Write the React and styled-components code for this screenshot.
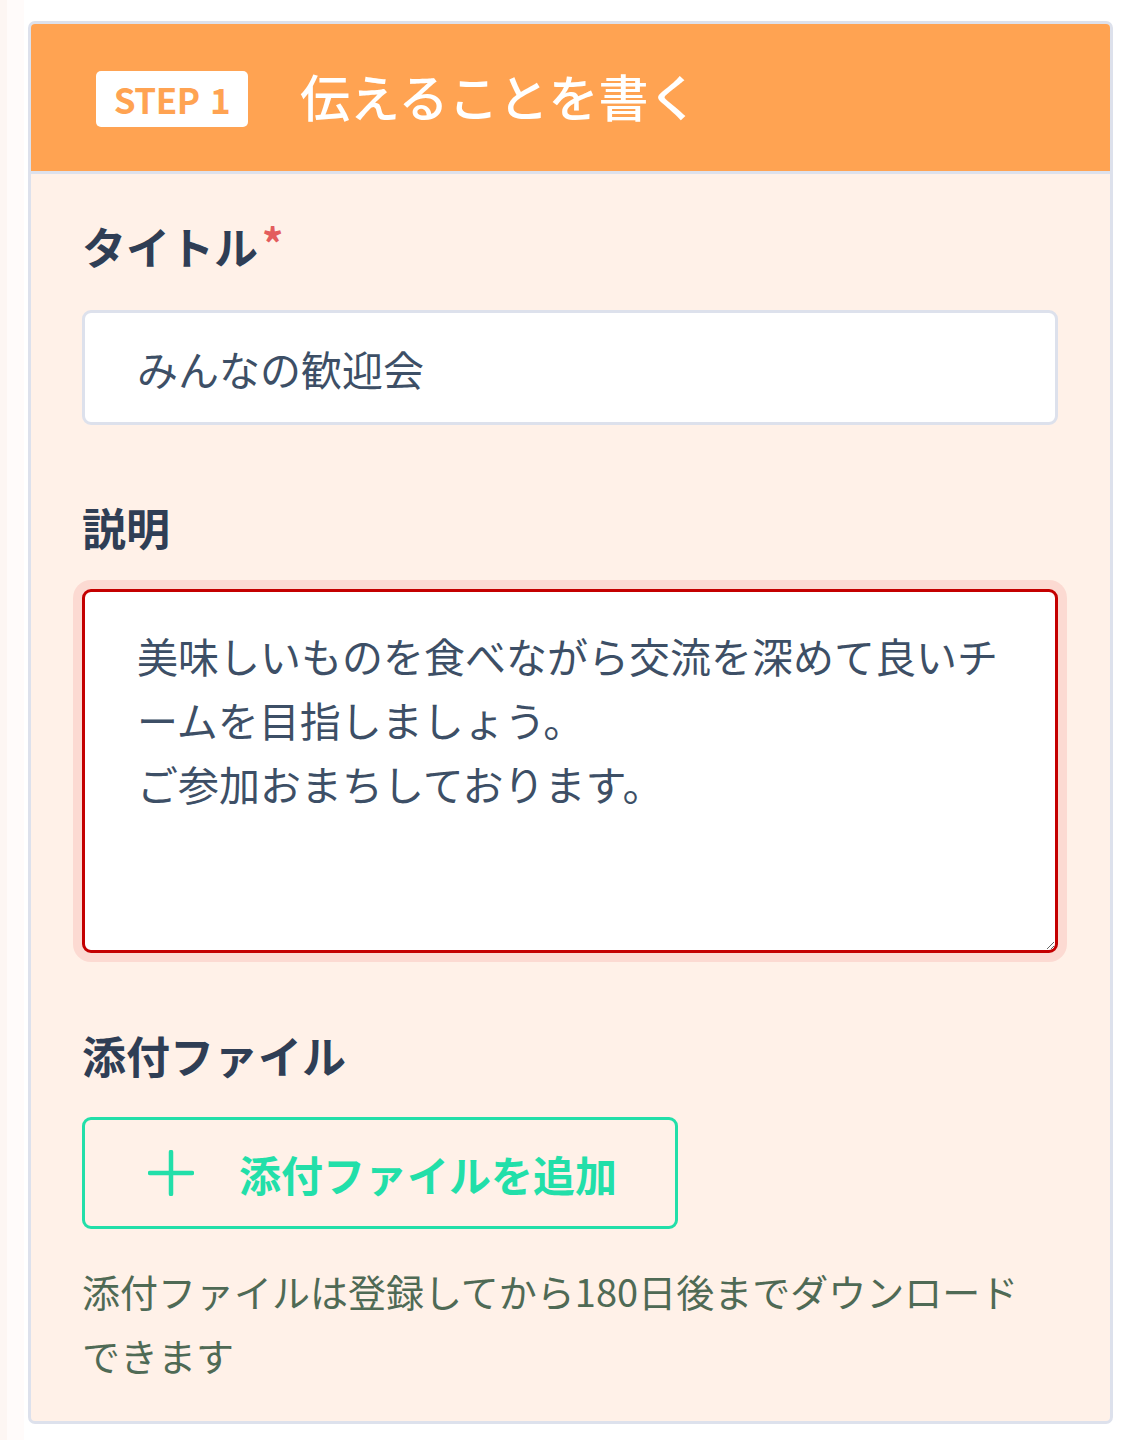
import React from "react";
import styled, { createGlobalStyle } from "styled-components";

const Global = createGlobalStyle`
  html, body { margin: 0; padding: 0; }
  body {
    background: linear-gradient(to right, #fdf6f3 0, #fdf6f3 7px, #fffbfa 7px, #fffbfa 24px, #ffffff 24px);
    font-family: "Noto Sans CJK JP", "Noto Sans", sans-serif;
  }
  * { box-sizing: border-box; }
`;

const Page = styled.div`
  padding: 21px 21px 17px 28px;
`;

const Card = styled.section`
  border: 3px solid #dde1ec;
  border-radius: 7px;
  overflow: hidden;
  background: #fff1e8;
`;

const Header = styled.header`
  display: flex;
  align-items: center;
  gap: 52px;
  height: 150px;
  padding: 0 0 3px 65px;
  background: #ffa352;
  border-bottom: 3px solid #dde1ec;
`;

const Badge = styled.span`
  display: inline-flex;
  align-items: center;
  justify-content: center;
  width: 152px;
  height: 56px;
  background: #ffffff;
  border-radius: 5px;
  color: #ffa352;
  font-weight: 700;
  font-size: 35px;
  letter-spacing: -0.5px;
  word-spacing: 3px;
  line-height: 1;
  margin-top: 5px;
`;

const HeaderTitle = styled.h1`
  margin: 0 0 3px;
  color: #ffffff;
  font-size: 50px;
  font-weight: 500;
  line-height: 1;
`;

const Body = styled.div`
  padding: 39px 52px 34px 51px;
`;

const Field = styled.div`
  display: flex;
  flex-direction: column;
  align-items: flex-start;
  gap: ${(p) => p.$gap || 31}px;
  & + & {
    margin-top: 69px;
  }
`;

const Label = styled.label`
  display: inline-flex;
  align-items: flex-start;
  color: #2f3e55;
  font-size: 44px;
  font-weight: 700;
  line-height: 66px;
`;

const Required = styled.span`
  color: #e35d5d;
  font-size: 42px;
  font-weight: 700;
  line-height: 1;
  margin-left: 4px;
  margin-top: 8px;
`;

const TextInput = styled.input`
  width: 100%;
  height: 115px;
  padding: 0 52px;
  border: 3px solid #dde1ec;
  border-radius: 9px;
  background: #ffffff;
  color: #3d4f66;
  font-family: inherit;
  font-size: 41px;
  outline: none;
`;

const TextArea = styled.textarea`
  display: block;
  width: 100%;
  height: 364px;
  padding: 31px 52px;
  border: 3px solid #c40000;
  border-radius: 9px;
  background: #ffffff;
  box-shadow: 0 0 0 9px #fcdad2;
  color: #3d4f66;
  font-family: inherit;
  font-size: 41px;
  line-height: 64px;
  outline: none;
  resize: vertical;
`;

const AddButton = styled.button`
  display: inline-flex;
  align-items: center;
  gap: 45px;
  width: 596px;
  height: 112px;
  padding: 0 0 0 63px;
  border: 3px solid #22dfa9;
  border-radius: 9px;
  background: transparent;
  color: #22dfa9;
  font-family: inherit;
  font-size: 42px;
  font-weight: 700;
  cursor: pointer;
`;

const Help = styled.p`
  margin: 30px 0 0;
  color: #4f6a55;
  font-size: 38px;
  line-height: 64px;
  padding-right: 20px;
`;

const PlusIcon = () => (
  <svg width="46" height="46" viewBox="0 0 46 46" aria-hidden="true">
    <path d="M23 2V44M2 23H44" stroke="#22dfa9" strokeWidth="4.5" strokeLinecap="round" fill="none" />
  </svg>
);

export default function App() {
  return (
    <Page>
      <Global />
      <Card>
        <Header>
          <Badge>STEP 1</Badge>
          <HeaderTitle>伝えることを書く</HeaderTitle>
        </Header>
        <Body>
          <Field>
            <Label>
              タイトル<Required>*</Required>
            </Label>
            <TextInput defaultValue="みんなの歓迎会" />
          </Field>
          <Field $gap={29}>
            <Label>説明</Label>
            <TextArea
              defaultValue={"美味しいものを食べながら交流を深めて良いチームを目指しましょう。\nご参加おまちしております。"}
            />
          </Field>
          <Field $gap={29}>
            <Label>添付ファイル</Label>
            <AddButton type="button">
              <PlusIcon />
              添付ファイルを追加
            </AddButton>
          </Field>
          <Help>添付ファイルは登録してから180日後までダウンロードできます</Help>
        </Body>
      </Card>
    </Page>
  );
}
